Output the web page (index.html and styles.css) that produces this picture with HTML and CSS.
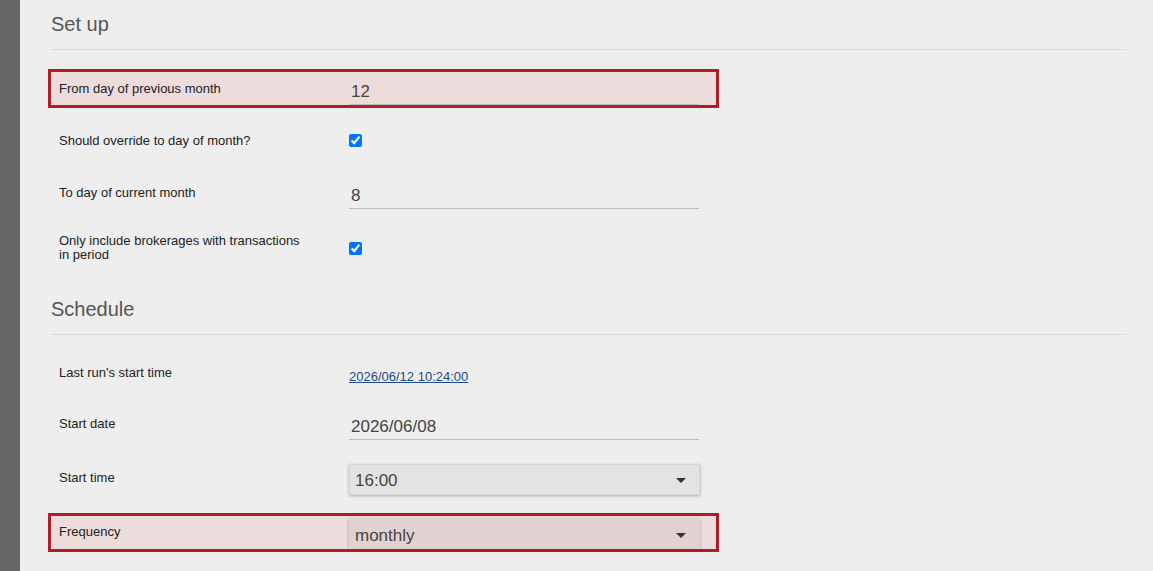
FILE: index.html
```html
<!DOCTYPE html>
<html lang="en">
<head>
<meta charset="utf-8">
<title>Set up</title>
<link rel="stylesheet" href="styles.css">
</head>
<body>
<div class="layout">
  <aside class="sidebar"></aside>
  <main class="content">
    <h2 class="section-title first">Set up</h2>
    <div class="row highlight">
      <label class="label">From day of previous month</label>
      <div class="field"><div class="input">12</div></div>
    </div>
    <div class="row">
      <label class="label">Should override to day of month?</label>
      <div class="field"><input type="checkbox" class="check" checked></div>
    </div>
    <div class="row">
      <label class="label">To day of current month</label>
      <div class="field"><div class="input">8</div></div>
    </div>
    <div class="row tall">
      <label class="label two-line">Only include brokerages with transactions in period</label>
      <div class="field"><input type="checkbox" class="check" checked></div>
    </div>

    <h2 class="section-title second">Schedule</h2>
    <div class="row short">
      <label class="label">Last run's start time</label>
      <div class="field"><a class="link" href="#">2026/06/12 10:24:00</a></div>
    </div>
    <div class="row">
      <label class="label">Start date</label>
      <div class="field"><div class="input">2026/06/08</div></div>
    </div>
    <div class="row select-row">
      <label class="label">Start time</label>
      <div class="field top"><div class="select">16:00</div></div>
    </div>
    <div class="row highlight clip">
      <label class="label">Frequency</label>
      <div class="field top"><div class="select">monthly</div></div>
    </div>
    <div class="row select-row">
      <label class="label"></label>
      <div class="field top"><div class="select"></div></div>
    </div>
  </main>
</div>
</body>
</html>
```

FILE: styles.css
```css
* { box-sizing: border-box; }
html, body {
  margin: 0;
  padding: 0;
  height: 100%;
  overflow: hidden;
  background: #eeeeee;
  font-family: "Liberation Sans", Arial, sans-serif;
}
.layout {
  display: flex;
  min-height: 100%;
}
.sidebar {
  width: 20px;
  flex: none;
  background: #666666;
}
.content {
  flex: 1;
  padding: 0 27px 0 28px;
}
.section-title {
  margin: 0 0 19px 3px;
  padding: 12px 0 13px;
  font-size: 20px;
  line-height: 24px;
  font-weight: normal;
  color: #555555;
  border-bottom: 1px solid #dcdcdc;
}
.section-title.second {
  margin-top: 0;
  padding-top: 13px;
}
.row {
  display: flex;
  align-items: center;
  width: 671px;
  height: 39px;
  border: 3px solid transparent;
  margin-bottom: 13px;
}
.row.short {
  height: 37px;
}
.row.tall {
  height: 46px;
}
.row.select-row {
  height: 44px;
  align-items: flex-start;
}
.row.highlight {
  border-color: #b01d25;
  background: #ecdcdc;
}
.row.clip {
  overflow: hidden;
  align-items: flex-start;
}
.label {
  width: 298px;
  flex: none;
  padding-left: 8px;
  font-size: 13px;
  line-height: 15px;
  color: #222222;
}
.row.select-row .label,
.row.clip .label {
  align-self: center;
}
.row.select-row .label { margin-top: -1px; }
.row.clip .label { margin-top: -2px; }
.label.two-line {
  padding-right: 48px;
  line-height: 14px;
}
.field {
  width: 351px;
  flex: none;
  display: flex;
  align-items: center;
  height: 100%;
}
.field.top {
  align-items: flex-start;
  padding-top: 3px;
  height: auto;
}
.row.select-row .field.top {
  padding-top: 5px;
}
.input {
  width: 350px;
  height: 28px;
  margin-top: 4px;
  padding: 4px 2px 0;
  font-size: 17px;
  line-height: 22px;
  color: #444444;
  border-bottom: 1px solid #bdbdbd;
}
.check {
  margin: 0;
  width: 13px;
  height: 13px;
  accent-color: #0075ff;
}
.link {
  margin-top: 8px;
  font-size: 13px;
  color: #1d4a85;
  text-decoration: underline;
}
.select {
  position: relative;
  width: 351px;
  height: 31px;
  padding: 0 5px;
  font-size: 17px;
  line-height: 31px;
  color: #444444;
  background: rgba(0, 0, 0, 0.045);
  border: 1px solid #d8d8d8;
  box-shadow: 0 1px 3px rgba(0, 0, 0, 0.28);
}
.select::after {
  content: "";
  position: absolute;
  right: 13px;
  top: 13px;
  border-left: 5px solid transparent;
  border-right: 5px solid transparent;
  border-top: 5px solid #333333;
}
```
